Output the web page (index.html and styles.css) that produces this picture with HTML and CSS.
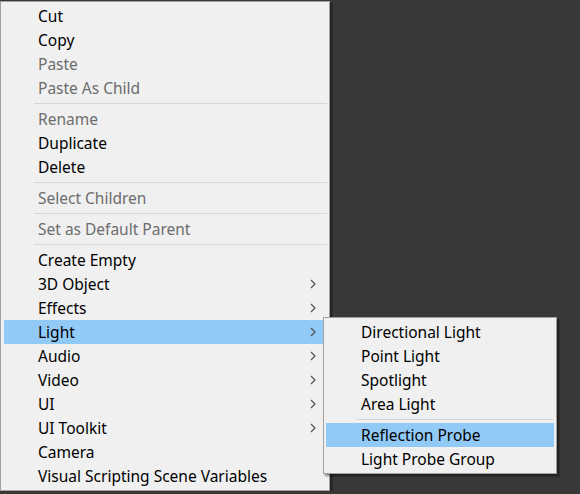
FILE: index.html
```html
<!DOCTYPE html>
<html lang="en">

<head>
    <meta charset="UTF-8">
    <title>Hierarchy menu</title>
    <link rel="stylesheet" href="styles.css">
</head>

<body>

    <div class="menu main-menu">
        <div class="item">Cut</div>
        <div class="item">Copy</div>
        <div class="item disabled">Paste</div>
        <div class="item disabled">Paste As Child</div>
        <div class="sep"></div>
        <div class="item disabled">Rename</div>
        <div class="item">Duplicate</div>
        <div class="item">Delete</div>
        <div class="sep"></div>
        <div class="item disabled">Select Children</div>
        <div class="sep"></div>
        <div class="item disabled">Set as Default Parent</div>
        <div class="sep"></div>
        <div class="item">Create Empty</div>
        <div class="item sub">3D Object <svg class="arrow" viewBox="0 0 6 10"><polyline points="1,1 5,5 1,9"/></svg></div>
        <div class="item sub">Effects <svg class="arrow" viewBox="0 0 6 10"><polyline points="1,1 5,5 1,9"/></svg></div>
        <div class="item sub active">Light <svg class="arrow" viewBox="0 0 6 10"><polyline points="1,1 5,5 1,9"/></svg></div>
        <div class="item sub">Audio <svg class="arrow" viewBox="0 0 6 10"><polyline points="1,1 5,5 1,9"/></svg></div>
        <div class="item sub">Video <svg class="arrow" viewBox="0 0 6 10"><polyline points="1,1 5,5 1,9"/></svg></div>
        <div class="item sub">UI <svg class="arrow" viewBox="0 0 6 10"><polyline points="1,1 5,5 1,9"/></svg></div>
        <div class="item sub">UI Toolkit <svg class="arrow" viewBox="0 0 6 10"><polyline points="1,1 5,5 1,9"/></svg></div>
        <div class="item">Camera</div>
        <div class="item">Visual Scripting Scene Variables</div>
    </div>

    <div class="menu sub-menu">
        <div class="item">Directional Light</div>
        <div class="item">Point Light</div>
        <div class="item">Spotlight</div>
        <div class="item">Area Light</div>
        <div class="sep"></div>
        <div class="item active">Reflection Probe</div>
        <div class="item">Light Probe Group</div>
    </div>

</body>

</html>
```

FILE: styles.css
```css
body {
    margin: 0;
    background-color: #383838;
    font-family: "Noto Sans", "Open Sans", sans-serif;
    font-size: 15.5px;
    color: #000;
}

.menu {
    background-color: #f0f0f0;
    border: 1px solid #a0a0a0;
    box-shadow: 2px 2px 2px rgba(0, 0, 0, 0.45);
    padding: 2px 0;
    box-sizing: border-box;
}

.main-menu {
    width: 330px;
    height: 490px;
    margin-top: 1px;
}

.sub-menu {
    position: absolute;
    left: 323px;
    top: 317px;
    width: 234px;
}

.item {
    height: 24px;
    line-height: 24px;
    padding-left: 34px;
    margin: 0 3px;
    position: relative;
    white-space: nowrap;
}

.sub-menu .item {
    margin: 0 2px;
    padding-left: 35px;
}

.item.disabled {
    color: #6d6d6d;
}

.item.active {
    background-color: #91c9f7;
}

.arrow {
    position: absolute;
    right: 10px;
    top: 7px;
    width: 6px;
    height: 10px;
    fill: none;
    stroke: #505050;
    stroke-width: 1.2;
}

.sep {
    height: 1px;
    background-color: #d7d7d7;
    margin: 3px 2px 3px 33px;
}

.sub-menu .sep {
    margin: 3px 2px 3px 32px;
}
```
